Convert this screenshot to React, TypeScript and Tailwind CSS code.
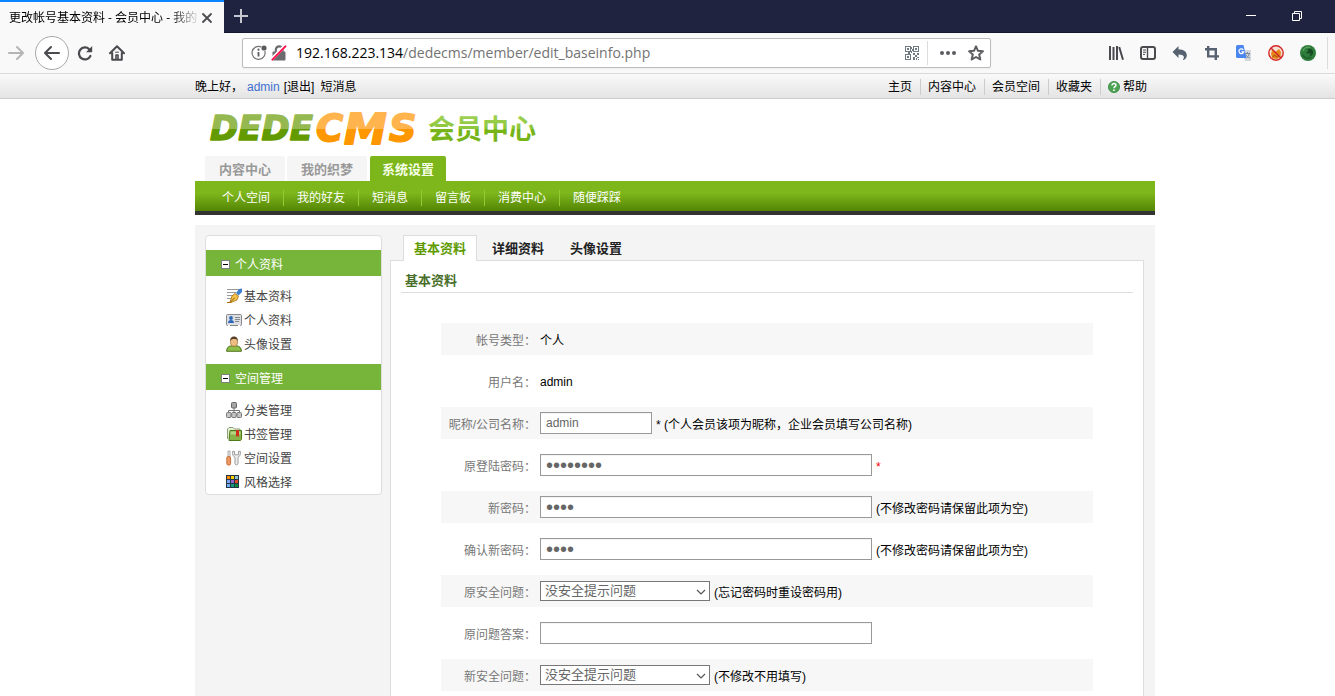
import React, { useState } from "react";

const topLinks = ["主页", "内容中心", "会员空间", "收藏夹"];
const mainTabs = ["内容中心", "我的织梦", "系统设置"];
const subLinks = ["个人空间", "我的好友", "短消息", "留言板", "消费中心", "随便踩踩"];
const panelTabs = ["基本资料", "详细资料", "头像设置"];

/* BROWSER ICONS */
const ForwardIcon = () => (
    <svg width="16" height="16" viewBox="0 0 16 16" fill="none" stroke="#b5b5b6" strokeWidth="2" strokeLinecap="round" strokeLinejoin="round">
        <path d="M1 8h14M9 2l6 6-6 6" />
    </svg>
);

const BackIcon = () => (
    <svg width="16" height="16" viewBox="0 0 16 16" fill="none" stroke="#4a4a4f" strokeWidth="2" strokeLinecap="round" strokeLinejoin="round">
        <path d="M15 8H1M7 2L1 8l6 6" />
    </svg>
);

const ReloadIcon = () => (
    <svg width="16" height="16" viewBox="0 0 16 16">
        <path d="M12.2 4.2A6 6 0 1 0 13.4 11" fill="none" stroke="#4a4a4f" strokeWidth="2.2" strokeLinecap="round" />
        <path d="M15.2 1v5.6a.6.6 0 0 1-.6.6H9z" fill="#4a4a4f" />
    </svg>
);

const HomeIcon = () => (
    <svg width="16" height="16" viewBox="0 0 16 16" fill="none" stroke="#4a4a4f" strokeWidth="2" strokeLinecap="round" strokeLinejoin="round">
        <path d="M1 8.3L8 1.3l7 7M3.2 8v6.8h9.6V8" />
        <path d="M7 14v-4h2v4" strokeWidth="1.6" />
        <path d="M6.5 7.2h3" strokeWidth="1" />
    </svg>
);

const InfoIcon = () => (
    <svg width="16" height="16" viewBox="0 0 16 16">
        <path d="M10.2 1.9A6.5 6.5 0 1 0 13.8 6" fill="none" stroke="#737376" strokeWidth="1.2" />
        <circle cx="13" cy="3" r="2.6" fill="#5a5a5e" />
        <path d="M7.5 7v4.5" stroke="#5a5a5e" strokeWidth="1.8" />
        <circle cx="7.5" cy="4.7" r="1.1" fill="#5a5a5e" />
    </svg>
);

const LockIcon = () => (
    <svg width="16" height="16" viewBox="0 0 16 16">
        <path d="M4.8 7V4.8a3.4 3.4 0 0 1 6.8 0V7" fill="none" stroke="#6b6b6f" strokeWidth="2.2" />
        <rect x="1.5" y="6.5" width="13" height="9" rx="1" fill="#6b6b6f" />
        <path d="M1 14L13.5 1.2" stroke="#fff" strokeWidth="3.4" />
        <path d="M1.4 14.6L14.4 1.4" stroke="#ff0f4b" strokeWidth="2" strokeLinecap="round" />
    </svg>
);

const QrIcon = () => (
    <svg width="14" height="14" viewBox="0 0 14 14" fill="#6f7a83">
        <path fillRule="evenodd" d="M0 0h6v6H0zM1 1v4h4V1zM8 0h6v6H8zM9 1v4h4V1zM0 8h6v6H0zM1 9v4h4V9z" />
        <path d="M2 2h2v2H2zM10 2h2v2h-2zM2 10h2v2H2zM6 1h1v2H6zM7 3h1v2H7zM6 5h1v2H6zM3 6h2v2H3zM8 7h2v2H8zM10 9h2v2h-2zM12 7h2v2h-2zM8 11h2v3H8zM12 11h2v1h-2zM11 12h1v2h-1zM13 13h1v1h-1z" />
    </svg>
);

const StarIcon = () => (
    <svg width="16" height="16" viewBox="0 0 16 16" fill="none" stroke="#5c5c60" strokeWidth="2" strokeLinejoin="round">
        <path d="M8 1.3l2 4.5 4.9.5-3.7 3.3 1.1 4.9L8 12l-4.3 2.5 1.1-4.9L1.1 6.3 6 5.8z" />
    </svg>
);

const LibraryIcon = () => (
    <svg width="16" height="16" viewBox="0 0 16 16" stroke="#4a4a4f" strokeWidth="2">
        <path d="M2 1v14M5.5 2v13M9 1v14M11.2 2l3.8 12.8" />
    </svg>
);

const SidebarIcon = () => (
    <svg width="16" height="16" viewBox="0 0 16 16" fill="none" stroke="#4a4a4f">
        <rect x="1" y="2" width="14" height="12" rx="2" strokeWidth="2" />
        <path d="M7.5 2v12" strokeWidth="1.4" />
        <path d="M3 5h3M3 7.2h3M3 9.4h2" strokeWidth="1" />
    </svg>
);

const UndoIcon = () => (
    <svg width="16" height="16" viewBox="0 0 16 16" fill="#566270">
        <path d="M6.5 1v3.2c5 .2 8.300 2.5 8.300 6 0 2-1 3.7-2.9 4.7-.5.3-1.100-.2-.7-.7.5-.6.7-1.2.7-1.9 0-1.800-1.900-2.700-5.400-2.700v3.400L.5 7z" />
    </svg>
);

const CropIcon = () => (
    <svg width="16" height="16" viewBox="0 0 16 16" fill="none" stroke="#566270" strokeWidth="2.4">
        <path d="M4.2 1v10.4H15M1 4.2h10.8V15" />
    </svg>
);

const TranslateIcon = () => (
    <svg width="16" height="16" viewBox="0 0 16 16">
        <path d="M6 5h9v11H9z" fill="#d5d8dc" />
        <path d="M9 8.5h5M11.5 7v1.5M13.3 9c-.5 1.8-1.6 3-3 4M10 9.8c.7 1.3 2 2.5 3.8 3.3" fill="none" stroke="#7a8894" strokeWidth="1" />
        <path d="M0 1.5A1.5 1.5 0 0 1 1.5 0h6l3 13h-9A1.5 1.5 0 0 1 0 11.5z" fill="#4a86f0" />
        <path d="M7.3 4.8a2.4 2.4 0 1 0 .4 2H5.5" fill="none" stroke="#fff" strokeWidth="1.2" />
    </svg>
);

const BlockedIcon = () => (
    <svg width="16" height="16" viewBox="0 0 16 16">
        <circle cx="8" cy="8" r="7.2" fill="#f3e2d4" />
        <path d="M3 9l1-4 3 2 4-3 2 3-.5 4.5-3 2.5-5-.5z" fill="#e8861a" />
        <path d="M4.5 12l2-2 2 2 2-1.5" fill="none" stroke="#934806" strokeWidth="1" />
        <circle cx="8" cy="8" r="7.2" fill="none" stroke="#d4282b" strokeWidth="1.4" />
        <path d="M3 3l10 10" stroke="#d4282b" strokeWidth="1.5" />
    </svg>
);

const GlobeIcon = () => (
    <svg width="16" height="16" viewBox="0 0 16 16">
        <circle cx="8" cy="8" r="8" fill="#2e7d3a" />
        <path d="M3 6c1-3 4-4.5 7-3.5" fill="none" stroke="#62a868" strokeWidth="1.2" />
        <path d="M8 4c3-1 5.5 1 5 4-.4 2.4-2.5 4-5 3.5 2-.5 3-2 2.5-3.5-2 1-4 .5-4.5-1 1.5 0 2.5-.5 2-3z" fill="#164a22" />
        <path d="M2.5 9.5c1.5 3.5 6 4.5 9 3" fill="none" stroke="#1c5a2a" strokeWidth="1.3" />
    </svg>
);

/* SITE LOGO */
const Logo = () => (
    <svg width="335" height="57" viewBox="0 -10 335 57" role="img" aria-label="DEDECMS 会员中心" strokeLinejoin="round">
        <defs>
            <linearGradient id="logoGreen" gradientUnits="userSpaceOnUse" x1="0" y1="0" x2="0" y2="40">
                <stop offset=".5" stopColor="#95b950" />
                <stop offset=".5" stopColor="#629a00" />
            </linearGradient>
            <linearGradient id="logoOrange" gradientUnits="userSpaceOnUse" x1="0" y1="0" x2="0" y2="40">
                <stop offset=".5" stopColor="#ffb44e" />
                <stop offset=".5" stopColor="#ff9800" />
            </linearGradient>
            <linearGradient id="logoLime" gradientUnits="userSpaceOnUse" x1="0" y1="4" x2="0" y2="36">
                <stop offset="0" stopColor="#a2d35a" />
                <stop offset=".5" stopColor="#8cc63a" />
                <stop offset=".5" stopColor="#77b41a" />
            </linearGradient>
        </defs>
        <g className="font-['DejaVu_Sans',sans-serif] font-bold italic">
            <text x="1" y="31" fontSize="34" fill="url(#logoGreen)" stroke="url(#logoGreen)" strokeWidth="1.4">DEDE</text>
            <g fill="url(#logoOrange)" stroke="url(#logoOrange)" strokeWidth="1.8">
                <text x="107" y="32" fontSize="37">C</text>
                <text x="135" y="35" fontSize="43">M</text>
                <text x="180" y="32" fontSize="38">S</text>
            </g>
        </g>
        <text x="219" y="30" fontSize="27" fill="url(#logoLime)" className="font-bold">会员中心</text>
    </svg>
);

/* SIDEBAR ICONS */
const PenIcon = () => (
    <svg width="16" height="16" viewBox="0 0 16 16">
        <path d="M1 1.5h12M1 4.5h9M1 7.5h6M1 10.5h4" stroke="#999" strokeWidth="1" />
        <path d="M10 5l3-4 3-.5V4l-3.5 3.5z" fill="#3f7fd0" />
        <path d="M9 5.5L12.5 8 11 12l-6 2.5L4 14l2-6z" fill="#f2c24b" stroke="#a9700f" strokeWidth=".8" />
        <path d="M4.3 14.3L8.6 9.8" stroke="#7d5008" strokeWidth=".9" />
        <path d="M1 14.5h4" stroke="#a9700f" />
    </svg>
);

const CardIcon = () => (
    <svg width="16" height="16" viewBox="0 0 16 16">
        <rect x=".5" y="2.5" width="15" height="11" rx="1" fill="#dcdee2" stroke="#85898e" />
        <circle cx="5" cy="6" r="1.9" fill="#2d67b8" />
        <path d="M2 11c0-2 1.2-3 3-3s3 1 3 3z" fill="#2d67b8" />
        <path d="M9 5.5h5M9 7.5h5M9 9.5h4" stroke="#85898e" />
        <path d="M2 13.5h2M12 13.5h2" stroke="#fff" />
    </svg>
);

const PersonIcon = () => (
    <svg width="16" height="16" viewBox="0 0 16 16">
        <path d="M.6 15.3c0-3.6 2-5.3 5-5.5h4.8c3 .2 5 1.9 5 5.5z" fill="#8dbd4b" stroke="#44690f" strokeWidth=".9" />
        <ellipse cx="8" cy="5.8" rx="3.5" ry="4.5" fill="#edbd83" stroke="#9d6932" strokeWidth=".7" />
        <path d="M4.2 5C4 2 5.5.4 8 .4S12 2 11.8 5c-.7-1.7-2-2-3.8-2S5 3.5 4.2 5z" fill="#57402c" />
    </svg>
);

const TreeIcon = () => (
    <svg width="16" height="16" viewBox="0 0 16 16">
        <path d="M8 6v5M2.5 11V8.5h11V11" fill="none" stroke="#777" />
        <rect x="5.5" y=".5" width="5" height="5.5" rx="1" fill="#a5a5a5" stroke="#666" />
        <rect x=".5" y="10.5" width="4.5" height="5" rx="1" fill="#c5c5c5" stroke="#777" />
        <rect x="5.7" y="10.5" width="4.5" height="5" rx="1" fill="#c5c5c5" stroke="#777" />
        <rect x="11" y="10.5" width="4.5" height="5" rx="1" fill="#c5c5c5" stroke="#777" />
    </svg>
);

const FolderIcon = () => (
    <svg width="16" height="16" viewBox="0 0 16 16">
        <path d="M1.5 13V3L3 1.5h4L8.5 3H14v3" fill="#e8f0d8" stroke="#8c9d77" />
        <path d="M4 4.5h11.5v9l-1 1H3z" fill="#86b44a" stroke="#4d7a1c" />
        <path d="M4.5 5.5h10v3h-10z" fill="#b4d584" />
        <path d="M10 4h3v7l-1.5-1.3L10 11z" fill="#cf2e1e" />
    </svg>
);

const ToolsIcon = () => (
    <svg width="16" height="16" viewBox="0 0 16 16">
        <path d="M2 1h2v6H2z" fill="#eee" stroke="#999" strokeWidth=".8" />
        <rect x=".8" y="6.5" width="3.8" height="8.5" rx="1.5" fill="#ee9a66" stroke="#c2642a" strokeWidth=".9" />
        <path d="M6.7 1.3h1.9v3.5h3.8V1.3h1.9c.5 3-.4 5.2-2.3 6v6.2c0 1.7-3 1.7-3 0V7.3c-1.9-.8-2.8-3-2.3-6z" fill="#ededed" stroke="#929292" strokeWidth=".9" />
    </svg>
);

const PaletteIcon = () => (
    <svg width="16" height="16" viewBox="0 0 16 16">
        <rect x="0" y="1" width="13" height="13" fill="#263746" />
        <path d="M1 2h3v3H1z" fill="#ff8a00" />
        <path d="M5 2h3v3H5z" fill="#ffd400" />
        <path d="M9 2h3v3H9z" fill="#8fc1cf" />
        <path d="M1 6h3v3H1z" fill="#7ca5f2" />
        <path d="M5 6h3v3H5z" fill="#9268cf" />
        <path d="M9 6h3v3H9z" fill="#e34b26" />
        <path d="M1 10h3v3H1z" fill="#74aef2" />
        <path d="M5 10h3v3H5z" fill="#139a83" />
        <path d="M9 10h3v3H9z" fill="#108a3b" />
    </svg>
);

const HelpIcon = () => (
    <svg width="12" height="12" viewBox="0 0 12 12">
        <circle cx="6" cy="6" r="5.6" fill="#4ba353" stroke="#3b8a43" strokeWidth=".8" />
        <path d="M4 4.5C4 3.2 4.8 2.5 6 2.5s2 .7 2 1.8C8 5.6 6 5.7 6 7.2" fill="none" stroke="#fff" strokeWidth="1.4" />
        <circle cx="6" cy="9.2" r=".9" fill="#fff" />
    </svg>
);

const sideMenu = [
    {
        title: "个人资料",
        items: [
            { label: "基本资料", icon: <PenIcon /> },
            { label: "个人资料", icon: <CardIcon /> },
            { label: "头像设置", icon: <PersonIcon /> },
        ],
    },
    {
        title: "空间管理",
        items: [
            { label: "分类管理", icon: <TreeIcon /> },
            { label: "书签管理", icon: <FolderIcon /> },
            { label: "空间设置", icon: <ToolsIcon /> },
            { label: "风格选择", icon: <PaletteIcon /> },
        ],
    },
];

const BrowserChrome: React.FC = () => {
    const [url, setUrl] = useState("/dedecms/member/edit_baseinfo.php");

    return (
        <header className="font-['Open_Sans','Noto_Sans_CJK_SC',sans-serif]">
            {/* Tab strip */}
            <div className="flex h-[33px] items-stretch border-b border-[#15172f] bg-[#202340]">
                <div className="-mb-px flex w-56 items-center border-t-2 border-[#0a84ff] bg-[#f9f9fa] pl-[9px]">
                    <span className="w-48 text-xs whitespace-nowrap text-black [mask-image:linear-gradient(to_right,#000_84%,transparent)]">
                        更改帐号基本资料 - 会员中心 - 我的
                    </span>
                    <button aria-label="Close tab">
                        <svg width="12" height="12" viewBox="0 0 12 12" stroke="#4a4a4f" strokeWidth="1.8" strokeLinecap="round">
                            <path d="M2 2l8 8M10 2l-8 8" />
                        </svg>
                    </button>
                </div>
                <button aria-label="New tab" className="ml-[10px]">
                    <svg width="14" height="14" viewBox="0 0 14 14" stroke="#c7c7d1" strokeWidth="2">
                        <path d="M7 0v14M0 7h14" />
                    </svg>
                </button>
                <div className="ml-auto flex items-center gap-9 pr-[33px]">
                    <button aria-label="Minimize">
                        <svg width="10" height="10" viewBox="0 0 10 10" stroke="#fff">
                            <path d="M0 4.5h10" />
                        </svg>
                    </button>
                    <button aria-label="Restore">
                        <svg width="10" height="10" viewBox="0 0 10 10" fill="none" stroke="#fff">
                            <path d="M.5 2.5h7v7h-7zM2.5 2.5v-2h7v7h-2" />
                        </svg>
                    </button>
                </div>
            </div>

            {/* Toolbar */}
            <div className="flex h-[41px] items-center border-b border-[#d9d9db] bg-[#f9f9fa] pl-2">
                <button aria-label="Forward"><ForwardIcon /></button>
                <button aria-label="Back" className="ml-[11px] flex h-[34px] w-[34px] items-center justify-center rounded-full border border-[#a8a8aa] bg-white"><BackIcon /></button>
                <button aria-label="Reload" className="ml-2"><ReloadIcon /></button>
                <button aria-label="Home" className="ml-4"><HomeIcon /></button>

                <div className="mx-[117px] flex h-[30px] min-w-0 flex-1 items-center rounded-xs border border-[#bcbcbe] bg-white pl-2 shadow-xs">
                    <InfoIcon />
                    <span className="ml-1"><LockIcon /></span>
                    <label htmlFor="url" className="ml-[9px] text-sm text-black">192.168.223.134</label>
                    <input id="url" type="text" value={url} onChange={(e) => setUrl(e.target.value)} className="min-w-0 flex-1 bg-transparent text-sm text-[#737373] outline-none" />
                    <QrIcon />
                    <span className="mx-2 h-6 w-px bg-[#dcdcde]"></span>
                    <button aria-label="Page actions" className="ml-1">
                        <svg width="16" height="16" viewBox="0 0 16 16" fill="#5c5c60">
                            <circle cx="2" cy="8" r="2" />
                            <circle cx="8" cy="8" r="2" />
                            <circle cx="14" cy="8" r="2" />
                        </svg>
                    </button>
                    <button aria-label="Bookmark" className="mr-1.5 ml-3"><StarIcon /></button>
                </div>

                <div className="flex items-center gap-4">
                    <LibraryIcon />
                    <SidebarIcon />
                    <UndoIcon />
                    <CropIcon />
                    <TranslateIcon />
                    <BlockedIcon />
                    <GlobeIcon />
                </div>
                <span className="mr-[7px] ml-[11px] h-8 w-px bg-[#dcdcde]"></span>
            </div>
        </header>
    );
};

type FieldRowProps = {
    label: string;
    htmlFor?: string;
    hint?: string;
    hintClass?: string;
    striped?: boolean;
    children: React.ReactNode;
};

const FieldRow: React.FC<FieldRowProps> = ({ label, htmlFor, hint, hintClass = "text-black", striped, children }) => (
    <div className={`flex h-8 items-center gap-1 ${striped ? "bg-[#f7f7f7]" : ""}`}>
        <label htmlFor={htmlFor} className="w-[95px] pt-[3px] text-right whitespace-nowrap text-[#777]">{label}：</label>
        {children}
        {hint && <span className={`pt-[3px] ${hintClass}`}>{hint}</span>}
    </div>
);

const PasswordInput: React.FC<{ id: string; initial: string }> = ({ id, initial }) => {
    const [value, setValue] = useState(initial);
    return (
        <input
            id={id}
            type="password"
            value={value}
            onChange={(e) => setValue(e.target.value)}
            className="h-[22px] w-[332px] border border-[#999] bg-white px-[5px] text-xl leading-5 text-[#666] inset-shadow-xs outline-none"
        />
    );
};

const QuestionSelect: React.FC<{ id: string }> = ({ id }) => (
    <div className="relative">
        <select id={id} className="block h-5 w-[170px] appearance-none border border-[#777] bg-white px-1 text-[13px] leading-4 text-[#666] outline-none">
            <option>没安全提示问题</option>
        </select>
        <svg className="pointer-events-none absolute top-[7px] right-1" width="10" height="8" viewBox="0 0 10 8" fill="none" stroke="#555" strokeWidth="1.2">
            <path d="M1 2l4 4 4-4" />
        </svg>
    </div>
);

const App: React.FC = () => {
    const [nickname, setNickname] = useState("admin");
    const [answer, setAnswer] = useState("");

    return (
        <div className="flex min-h-screen flex-col bg-white font-['Liberation_Sans','Noto_Sans_CJK_SC',sans-serif] text-xs text-black">
            <BrowserChrome />

            {/* TOP BAR */}
            <div className="border-b border-[#ccc] bg-linear-to-b from-[#fafafa] to-[#e4e4e4] pl-[15px]">
                <div className="mx-auto flex h-6 max-w-[960px] items-center justify-between pt-0.5 pr-2">
                    <div className="flex gap-1">
                        <span>晚上好，</span>
                        <a href="#" className="text-[#3f6fd0]">admin</a>
                        <a href="#">[退出]</a>
                        <a href="#" className="ml-0.5">短消息</a>
                    </div>
                    <div className="flex items-center">
                        {topLinks.map((link) => (
                            <a key={link} href="#" className="border-r border-[#ccc] pr-2 pl-[7px] leading-4">{link}</a>
                        ))}
                        <a href="#" className="flex items-center gap-[3px] pl-[7px] leading-4"><HelpIcon />帮助</a>
                    </div>
                </div>
            </div>

            <div className="flex flex-1 flex-col pl-[15px]">
                <div className="mx-auto flex w-full max-w-[960px] flex-1 flex-col">
                    <div className="pl-[14px]">
                        <Logo />
                    </div>

                    {/* MAIN NAVIGATION */}
                    <nav>
                        <div className="flex gap-0.5 pl-[10px] text-[13px] font-bold">
                            {mainTabs.map((tab, i) => (
                                <a key={tab} href="#" className={`flex h-[25px] items-center rounded-t-xs pt-0.5 ${i === 2 ? "ml-px bg-[#7db61b] px-3 text-[#f5ffe5]" : "bg-[#f5f5f5] px-[14px] text-[#999]"}`}>{tab}</a>
                            ))}
                        </div>
                        <div className="flex h-[34px] items-center border-b-4 border-[#333] bg-linear-to-b from-[#7eb71c] from-40% to-[#548503] pt-[3px] pl-[14px] text-white">
                            {subLinks.map((link, i) => (
                                <a key={link} href="#" className={`px-[13px] leading-4 ${i > 0 ? "border-l border-[#93cb33]" : ""}`}>{link}</a>
                            ))}
                        </div>
                    </nav>

                    <div className="mt-[10px] flex flex-1 items-start bg-[#f4f4f4] pt-[10px] pr-[11px] pl-[10px]">
                        {/* SIDEBAR */}
                        <aside className="w-[177px] shrink-0 rounded-sm border border-[#ddd] bg-white pt-[14px]">
                            {sideMenu.map((group, i) => (
                                <div key={group.title}>
                                    <div className="flex h-[26px] items-center gap-[5px] bg-[#77b43a] pt-[3px] pl-[15px] text-white">
                                        <svg width="9" height="9" viewBox="0 0 9 9">
                                            <rect x=".5" y=".5" width="8" height="8" fill="#fff" stroke="#808080" />
                                            <path d="M2 4.5h5" stroke="#000" />
                                        </svg>
                                        {group.title}
                                    </div>
                                    <ul className={i === 0 ? "py-2" : "pt-2"}>
                                        {group.items.map((item) => (
                                            <li key={item.label}>
                                                <a href="#" className="flex h-6 items-center gap-0.5 pl-5 text-[#444]">{item.icon}<span className="pt-px">{item.label}</span></a>
                                            </li>
                                        ))}
                                    </ul>
                                </div>
                            ))}
                        </aside>

                        {/* CONTENT */}
                        <main className="ml-2 flex min-w-0 flex-1 flex-col self-stretch">
                            <div className="z-10 -mb-px flex pl-[13px] text-[13px] font-bold">
                                {panelTabs.map((tab, i) => (
                                    <a key={tab} href="#" className={`flex h-[26px] items-center pt-px ${i === 0 ? "mr-0.5 border border-b-0 border-[#ddd] bg-white px-[10px] text-[#5e9a00]" : "px-[13px] text-[#222]"}`}>{tab}</a>
                                ))}
                            </div>
                            <section className="flex-1 border border-b-0 border-[#ddd] bg-white px-[10px]">
                                <h1 className="border-b border-[#ddd] pt-3 pb-[3px] pl-1 text-[13px] leading-4 font-bold text-[#476f2a]">基本资料</h1>

                                <form className="mt-[30px] mr-10 ml-10 flex flex-col gap-[10px] pb-[5px]">
                                    <FieldRow label="帐号类型" striped>
                                        <span className="pt-[3px]">个人</span>
                                    </FieldRow>
                                    <FieldRow label="用户名">
                                        <span className="pt-0.5">admin</span>
                                    </FieldRow>
                                    <FieldRow label="昵称/公司名称" htmlFor="nickname" hint="* (个人会员该项为昵称，企业会员填写公司名称)" striped>
                                        <input id="nickname" type="text" value={nickname} onChange={(e) => setNickname(e.target.value)} className="h-[22px] w-28 border border-[#999] bg-white px-[5px] text-[#666] inset-shadow-xs outline-none" />
                                    </FieldRow>
                                    <FieldRow label="原登陆密码" htmlFor="oldpwd" hint="*" hintClass="text-[#f00]">
                                        <PasswordInput id="oldpwd" initial="dedecms1" />
                                    </FieldRow>
                                    <FieldRow label="新密码" htmlFor="newpwd" hint="(不修改密码请保留此项为空)" striped>
                                        <PasswordInput id="newpwd" initial="1234" />
                                    </FieldRow>
                                    <FieldRow label="确认新密码" htmlFor="newpwd2" hint="(不修改密码请保留此项为空)">
                                        <PasswordInput id="newpwd2" initial="1234" />
                                    </FieldRow>
                                    <FieldRow label="原安全问题" htmlFor="oldquestion" hint="(忘记密码时重设密码用)" striped>
                                        <QuestionSelect id="oldquestion" />
                                    </FieldRow>
                                    <FieldRow label="原问题答案" htmlFor="answer">
                                        <input id="answer" type="text" value={answer} onChange={(e) => setAnswer(e.target.value)} className="h-[22px] w-[332px] border border-[#999] bg-white px-[5px] text-[#666] inset-shadow-xs outline-none" />
                                    </FieldRow>
                                    <FieldRow label="新安全问题" htmlFor="newquestion" hint="(不修改不用填写)" striped>
                                        <QuestionSelect id="newquestion" />
                                    </FieldRow>
                                </form>
                            </section>
                        </main>
                    </div>
                </div>
            </div>
        </div>
    );
};

export default App;
